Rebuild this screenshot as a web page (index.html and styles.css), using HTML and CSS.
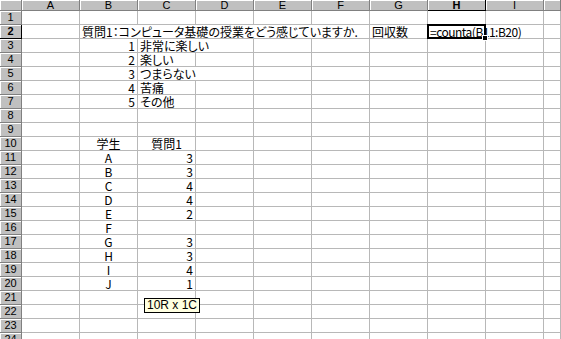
FILE: index.html
```html
<!DOCTYPE html>
<html lang="ja">
<head>
    <meta charset="UTF-8">
    <link rel="stylesheet" href="styles.css">
    <title>Sheet1</title>
</head>
<body>

<div class="wrap">
    <div class="sheet">
        <!-- column headers -->
        <div class="corner"></div><div class="ch">A</div><div class="ch">B</div><div class="ch">C</div><div class="ch">D</div><div class="ch">E</div><div class="ch">F</div><div class="ch">G</div><div class="ch on">H</div><div class="ch">I</div><div class="ch"></div>

        <div class="rh">1</div><div></div><div></div><div></div><div></div><div></div><div></div><div></div><div></div><div></div><div></div>
        <div class="rh on">2</div><div></div><div class="s5">質問1：コンピュータ基礎の授業をどう感じていますか.</div><div>回収数</div><div class="sel">=counta(B11:B20)</div><div></div><div></div>
        <div class="rh">3</div><div></div><div class="r">1</div><div class="s2">非常に楽しい</div><div></div><div></div><div></div><div></div><div></div><div></div>
        <div class="rh">4</div><div></div><div class="r">2</div><div>楽しい</div><div></div><div></div><div></div><div></div><div></div><div></div><div></div>
        <div class="rh">5</div><div></div><div class="r">3</div><div class="s2">つまらない</div><div></div><div></div><div></div><div></div><div></div><div></div>
        <div class="rh">6</div><div></div><div class="r">4</div><div>苦痛</div><div></div><div></div><div></div><div></div><div></div><div></div><div></div>
        <div class="rh">7</div><div></div><div class="r">5</div><div>その他</div><div></div><div></div><div></div><div></div><div></div><div></div><div></div>
        <div class="rh">8</div><div></div><div></div><div></div><div></div><div></div><div></div><div></div><div></div><div></div><div></div>
        <div class="rh">9</div><div></div><div></div><div></div><div></div><div></div><div></div><div></div><div></div><div></div><div></div>
        <div class="rh">10</div><div></div><div class="c">学生</div><div class="c">質問1</div><div></div><div></div><div></div><div></div><div></div><div></div><div></div>
        <div class="rh">11</div><div></div><div class="c">A</div><div class="r">3</div><div></div><div></div><div></div><div></div><div></div><div></div><div></div>
        <div class="rh">12</div><div></div><div class="c">B</div><div class="r">3</div><div></div><div></div><div></div><div></div><div></div><div></div><div></div>
        <div class="rh">13</div><div></div><div class="c">C</div><div class="r">4</div><div></div><div></div><div></div><div></div><div></div><div></div><div></div>
        <div class="rh">14</div><div></div><div class="c">D</div><div class="r">4</div><div></div><div></div><div></div><div></div><div></div><div></div><div></div>
        <div class="rh">15</div><div></div><div class="c">E</div><div class="r">2</div><div></div><div></div><div></div><div></div><div></div><div></div><div></div>
        <div class="rh">16</div><div></div><div class="c">F</div><div class="r"></div><div></div><div></div><div></div><div></div><div></div><div></div><div></div>
        <div class="rh">17</div><div></div><div class="c">G</div><div class="r">3</div><div></div><div></div><div></div><div></div><div></div><div></div><div></div>
        <div class="rh">18</div><div></div><div class="c">H</div><div class="r">3</div><div></div><div></div><div></div><div></div><div></div><div></div><div></div>
        <div class="rh">19</div><div></div><div class="c">I</div><div class="r">4</div><div></div><div></div><div></div><div></div><div></div><div></div><div></div>
        <div class="rh">20</div><div></div><div class="c">J</div><div class="r">1</div><div></div><div></div><div></div><div></div><div></div><div></div><div></div>
        <div class="rh">21</div><div></div><div></div><div></div><div></div><div></div><div></div><div></div><div></div><div></div><div></div>
        <div class="rh">22</div><div></div><div></div><div></div><div></div><div></div><div></div><div></div><div></div><div></div><div></div>
        <div class="rh">23</div><div></div><div></div><div></div><div></div><div></div><div></div><div></div><div></div><div></div><div></div>
        <div class="rh">24</div><div></div><div></div><div></div><div></div><div></div><div></div><div></div><div></div><div></div><div></div>
    </div>

    <div class="tip">10R x 1C</div>
</div>

</body>
</html>
```

FILE: styles.css
```css
body {
    margin: 0;
    background: #fff;
    overflow: hidden;
    height: 339px;
}

.wrap {
    position: relative;
}

.sheet {
    display: grid;
    grid-template-columns: 22px repeat(9, 58px) 1fr;
    grid-template-rows: 11px;
    grid-auto-rows: 14px;
}

.sheet div {
    box-sizing: border-box;
    border-right: 1px solid #b8b8b8;
    border-bottom: 1px solid #b8b8b8;
    padding: 0 2px;
    white-space: nowrap;
    font-family: "Noto Sans CJK JP", sans-serif;
    font-feature-settings: "palt";
    font-size: 12px;
    line-height: 13px;
    color: #000;
}

.sheet .corner,
.sheet .ch,
.sheet .rh {
    background: #c0c0c0;
    border-right-color: #808080;
    border-bottom-color: #808080;
    box-shadow: inset 1px 1px 0 #fff;
    padding: 0;
    text-align: center;
    font-family: "Liberation Sans", sans-serif;
    font-size: 11px;
    line-height: 10px;
}

.sheet .rh {
    line-height: 13px;
}

.sheet .on {
    font-weight: bold;
    border-right-color: #000;
    border-bottom-color: #000;
}

.s5 {
    grid-column: span 5;
}

.s2 {
    grid-column: span 2;
}

.r {
    text-align: right;
}

.c {
    text-align: center;
}

.sheet .sel {
    position: relative;
    z-index: 1;
    letter-spacing: -0.5px;
}

.sel::after {
    content: "";
    position: absolute;
    left: -1px;
    top: -1px;
    right: -1px;
    bottom: -1px;
    border: 2px solid #000;
}

.sel::before {
    content: "";
    position: absolute;
    right: -3px;
    bottom: -3px;
    width: 4px;
    height: 4px;
    background: #000;
    border: 1px solid #fff;
    z-index: 2;
}

.tip {
    position: absolute;
    left: 144px;
    top: 298px;
    height: 15px;
    box-sizing: border-box;
    padding: 0 2px;
    border: 1px solid #000;
    background: #ffffe1;
    font-family: "Liberation Sans", sans-serif;
    font-size: 12px;
    line-height: 13px;
}
```
